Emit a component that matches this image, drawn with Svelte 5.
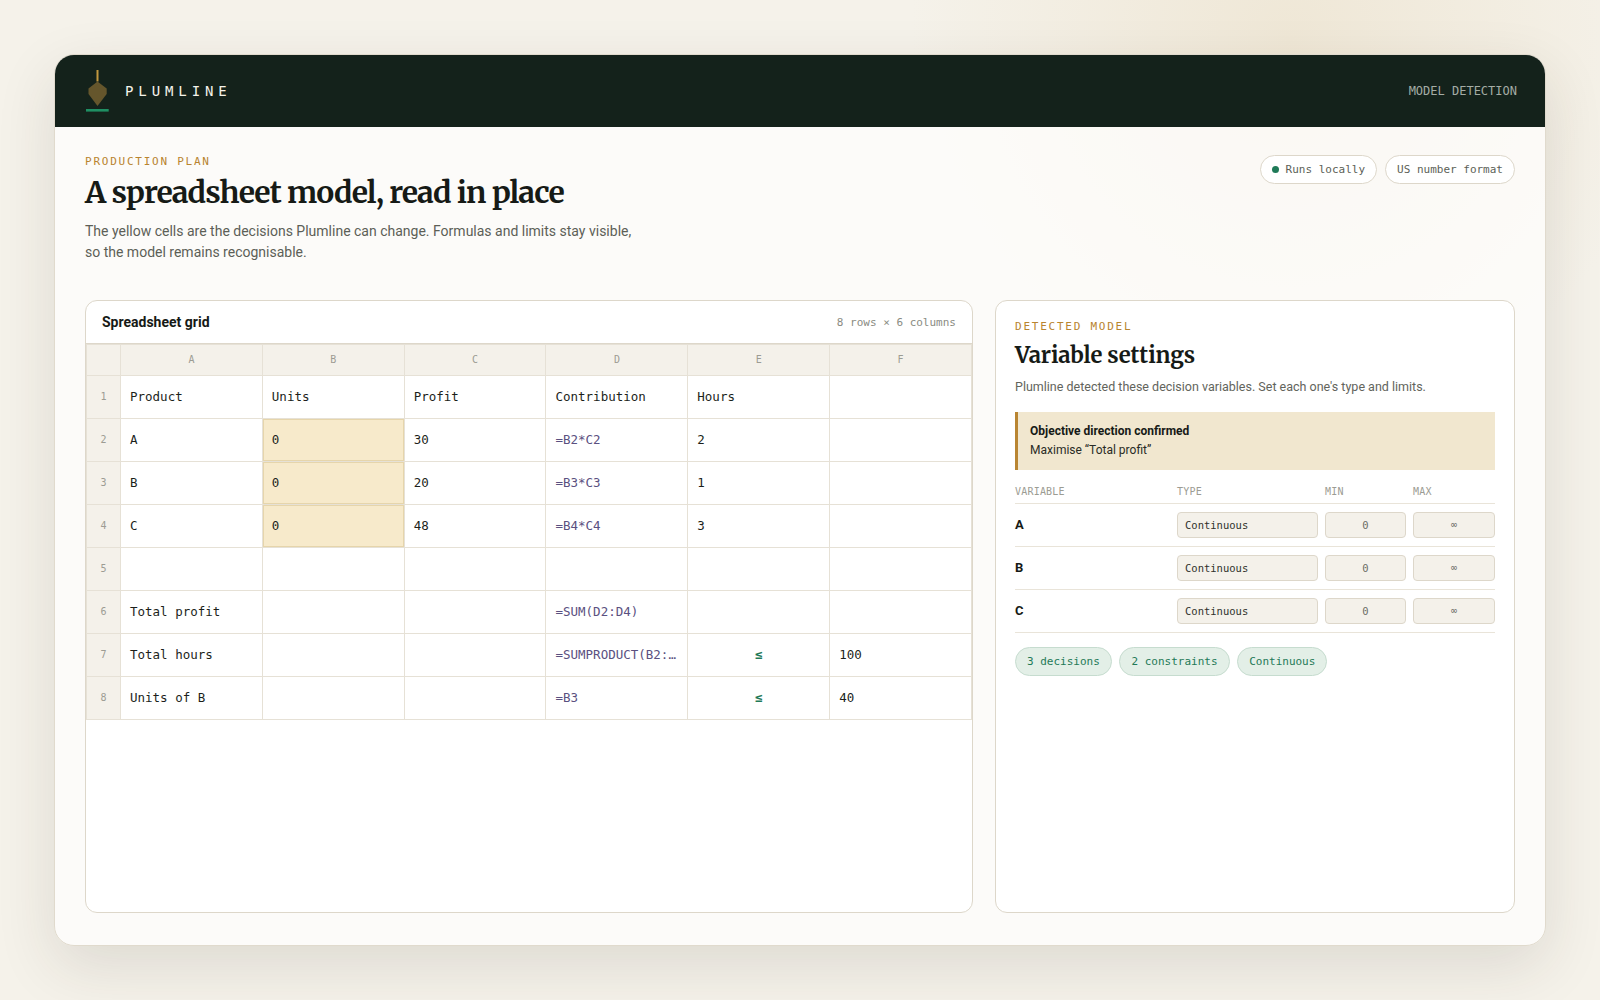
<script>
  const columns = ['A', 'B', 'C', 'D', 'E', 'F'];
  const rows = [
    ['Product', 'Units', 'Profit', 'Contribution', 'Hours', ''],
    ['A', '0', '30', '=B2*C2', '2', ''],
    ['B', '0', '20', '=B3*C3', '1', ''],
    ['C', '0', '48', '=B4*C4', '3', ''],
    ['', '', '', '', '', ''],
    ['Total profit', '', '', '=SUM(D2:D4)', '', ''],
    ['Total hours', '', '', '=SUMPRODUCT(B2:B4,E2:E4)', '≤', '100'],
    ['Units of B', '', '', '=B3', '≤', '40']
  ];
  const variables = ['A', 'B', 'C'];
  function cellClass(value, r, c) {
    if (c === 1 && r >= 1 && r <= 3) return 'decision';
    if (value.startsWith('=')) return 'formula';
    if (value === '≤') return 'op';
    return '';
  }
</script>

<div class="page">
  <div class="app">
    <header class="topbar">
      <div class="brand">
        <svg class="mark" width="26" height="44" viewBox="0 0 26 44" aria-hidden="true">
          <rect x="11.5" y="1" width="2" height="11.5" fill="#c2983f" />
          <path d="M12.5 12.5 L21.7 19.5 V25 L12.5 37 L3.5 25 V19.5 Z" fill="#65562c" />
          <rect x="1" y="40" width="22.7" height="2.6" fill="#1f8f63" />
        </svg>
        <span class="wordmark">PLUMLINE</span>
      </div>
      <span class="section">MODEL DETECTION</span>
    </header>

    <main class="content">
      <section class="intro">
        <div>
          <div class="eyebrow">PRODUCTION PLAN</div>
          <h1>A spreadsheet model, read in place</h1>
          <p>The yellow cells are the decisions Plumline can change. Formulas and limits stay visible, so the model remains recognisable.</p>
        </div>
        <div class="status">
          <span class="pill"><i class="dot"></i>Runs locally</span>
          <span class="pill">US number format</span>
        </div>
      </section>

      <section class="columns">
        <div class="panel grid-panel">
          <div class="panel-head">
            <strong>Spreadsheet grid</strong>
            <span>8 rows × 6 columns</span>
          </div>
          <table>
            <thead>
              <tr>
                <th class="corner"></th>
                {#each columns as col}<th>{col}</th>{/each}
              </tr>
            </thead>
            <tbody>
              {#each rows as row, r}
                <tr>
                  <td class="rownum">{r + 1}</td>
                  {#each row as value, c}
                    <td class={cellClass(value, r, c)}>{value}</td>
                  {/each}
                </tr>
              {/each}
            </tbody>
          </table>
        </div>

        <aside class="panel side">
          <div class="eyebrow">DETECTED MODEL</div>
          <h2>Variable settings</h2>
          <p class="lede">Plumline detected these decision variables. Set each one's type and limits.</p>
          <div class="notice">
            <strong>Objective direction confirmed</strong>
            <span>Maximise “Total profit”</span>
          </div>
          <div class="var-row var-head">
            <span>VARIABLE</span><span>TYPE</span><span>MIN</span><span>MAX</span>
          </div>
          {#each variables as v}
            <div class="var-row">
              <b>{v}</b>
              <div class="field type">Continuous</div>
              <div class="field num">0</div>
              <div class="field num inf">∞</div>
            </div>
          {/each}
          <div class="tags">
            <span>3 decisions</span>
            <span>2 constraints</span>
            <span>Continuous</span>
          </div>
        </aside>
      </section>
    </main>
  </div>
</div>

<style>
  :global(body) { margin: 0; }
  .page {
    width: 1600px; height: 1000px; box-sizing: border-box; padding: 54px;
    background: radial-gradient(circle 380px at 1290px 40px, #efe7d6 0, #f5f2ea 100%), #f5f2ea;
    font-family: Roboto, sans-serif; color: #161a16; overflow: hidden;
  }
  .app {
    height: 892px; box-sizing: border-box; border: 1px solid #e0dacd; border-radius: 20px;
    background: rgba(255, 255, 255, 0.7); overflow: hidden; display: flex; flex-direction: column;
    box-shadow: 0 20px 60px rgba(50, 45, 30, 0.12);
  }
  .topbar {
    height: 72px; flex: none; background: #14221b; display: flex; align-items: center;
    justify-content: space-between; padding: 0 28px 0 30px;
  }
  .brand { display: flex; align-items: center; gap: 14px; }
  .mark { display: block; }
  .wordmark { font: 14px "DejaVu Sans Mono", monospace; letter-spacing: 0.35em; color: #f4f2ea; }
  .section { font: 12px "DejaVu Sans Mono", monospace; color: #a4aca5; }
  .content { flex: 1; min-height: 0; padding: 28px 30px 32px; display: flex; flex-direction: column; }
  .intro { display: flex; justify-content: space-between; align-items: flex-start; height: 145px; flex: none; }
  .eyebrow { font: 11px "DejaVu Sans Mono", monospace; letter-spacing: 0.16em; color: #b8842f; line-height: 14px; }
  h1 { margin: 3px 0 9px; font: 700 30px/40px Merriweather, serif; letter-spacing: -0.03em; color: #161a16; }
  .intro p { margin: 0; width: 560px; font-size: 14px; line-height: 21px; color: #5c5f57; }
  .status { display: flex; gap: 8px; }
  .pill {
    height: 29px; box-sizing: border-box; padding: 0 11px; border: 1px solid #ddd7ca; border-radius: 15px;
    background: #fff; font: 11px/27px "DejaVu Sans Mono", monospace; color: #5c5f57; display: inline-flex; align-items: center;
  }
  .dot { width: 7px; height: 7px; border-radius: 50%; background: #1f7a58; margin-right: 7px; }
  .columns { flex: 1; min-height: 0; display: grid; grid-template-columns: 1fr 520px; gap: 22px; }
  .panel { background: #fff; border: 1px solid #ddd7ca; border-radius: 12px; overflow: hidden; }
  .panel-head {
    height: 43px; display: flex; align-items: center; justify-content: space-between; padding: 0 16px;
    border-bottom: 1px solid #ddd7ca; box-sizing: border-box;
  }
  .panel-head strong { font-size: 14px; font-weight: 700; }
  .panel-head span { font: 11px "DejaVu Sans Mono", monospace; color: #8a8b82; }
  table { width: 100%; border-collapse: collapse; table-layout: fixed; font: 12.5px "DejaVu Sans Mono", monospace; }
  th, td { border: 1px solid #e6e1d6; box-sizing: border-box; overflow: hidden; white-space: nowrap; text-overflow: ellipsis; }
  th { height: 31px; padding: 0 0 2px; background: #f4f1ea; font: 400 10px "DejaVu Sans Mono", monospace; color: #9c9c93; }
  .corner { width: 34px; }
  td { height: 43px; padding: 0 9px 2px; color: #1c1f1b; }
  td.rownum { background: #f4f1ea; font-size: 10px; color: #9c9c93; text-align: center; padding: 0 0 2px; }
  td.decision { background: #f7eacb; box-shadow: inset 0 0 0 1px #e6d5ab; }
  td.formula { color: #5a5080; }
  td.op { color: #1f7a58; text-align: center; font-weight: 700; }
  .side { padding: 19px 19px 0; }
  .side h2 { margin: 6px 0 8px; font: 700 22px/30px Merriweather, serif; letter-spacing: -0.005em; }
  .lede { margin: 0 0 16px; font-size: 12.5px; line-height: 18px; color: #62645c; }
  .notice {
    height: 58px; box-sizing: border-box; padding: 0 12px 2px; background: #f1e7cf; border-left: 3px solid #b98532;
    display: flex; flex-direction: column; justify-content: center; gap: 1px; font-size: 12px; line-height: 18px; color: #2a2c26;
  }
  .notice strong { color: #161a16; }
  .var-row {
    display: grid; grid-template-columns: 155px 141px 81px 82px; column-gap: 7px; align-items: center;
    height: 43px; border-bottom: 1px solid #e9e4d9; box-sizing: border-box; font-size: 13px;
  }
  .var-row b { margin-top: -2px; }
  .var-head { height: 34px; align-items: end; padding-bottom: 6px; font: 10px "DejaVu Sans Mono", monospace; color: #9c9c93; letter-spacing: 0.02em; }
  .field {
    height: 26px; box-sizing: border-box; border: 1px solid #ddd7ca; border-radius: 4px; background: #f4f1ea;
    font: 10.5px/24px "DejaVu Sans Mono", monospace; color: #2f312c;
  }
  .type { padding-left: 7px; }
  .num { text-align: center; color: #6b6d65; }
  .inf { font-size: 10px; }
  .tags { display: flex; gap: 7.6px; margin-top: 14px; }
  .tags span {
    height: 29px; box-sizing: border-box; padding: 0 11px; border-radius: 15px; border: 1px solid #c6dccf; background: #e3efe7;
    font: 11px/27px "DejaVu Sans Mono", monospace; color: #1f7a58;
  }
</style>
